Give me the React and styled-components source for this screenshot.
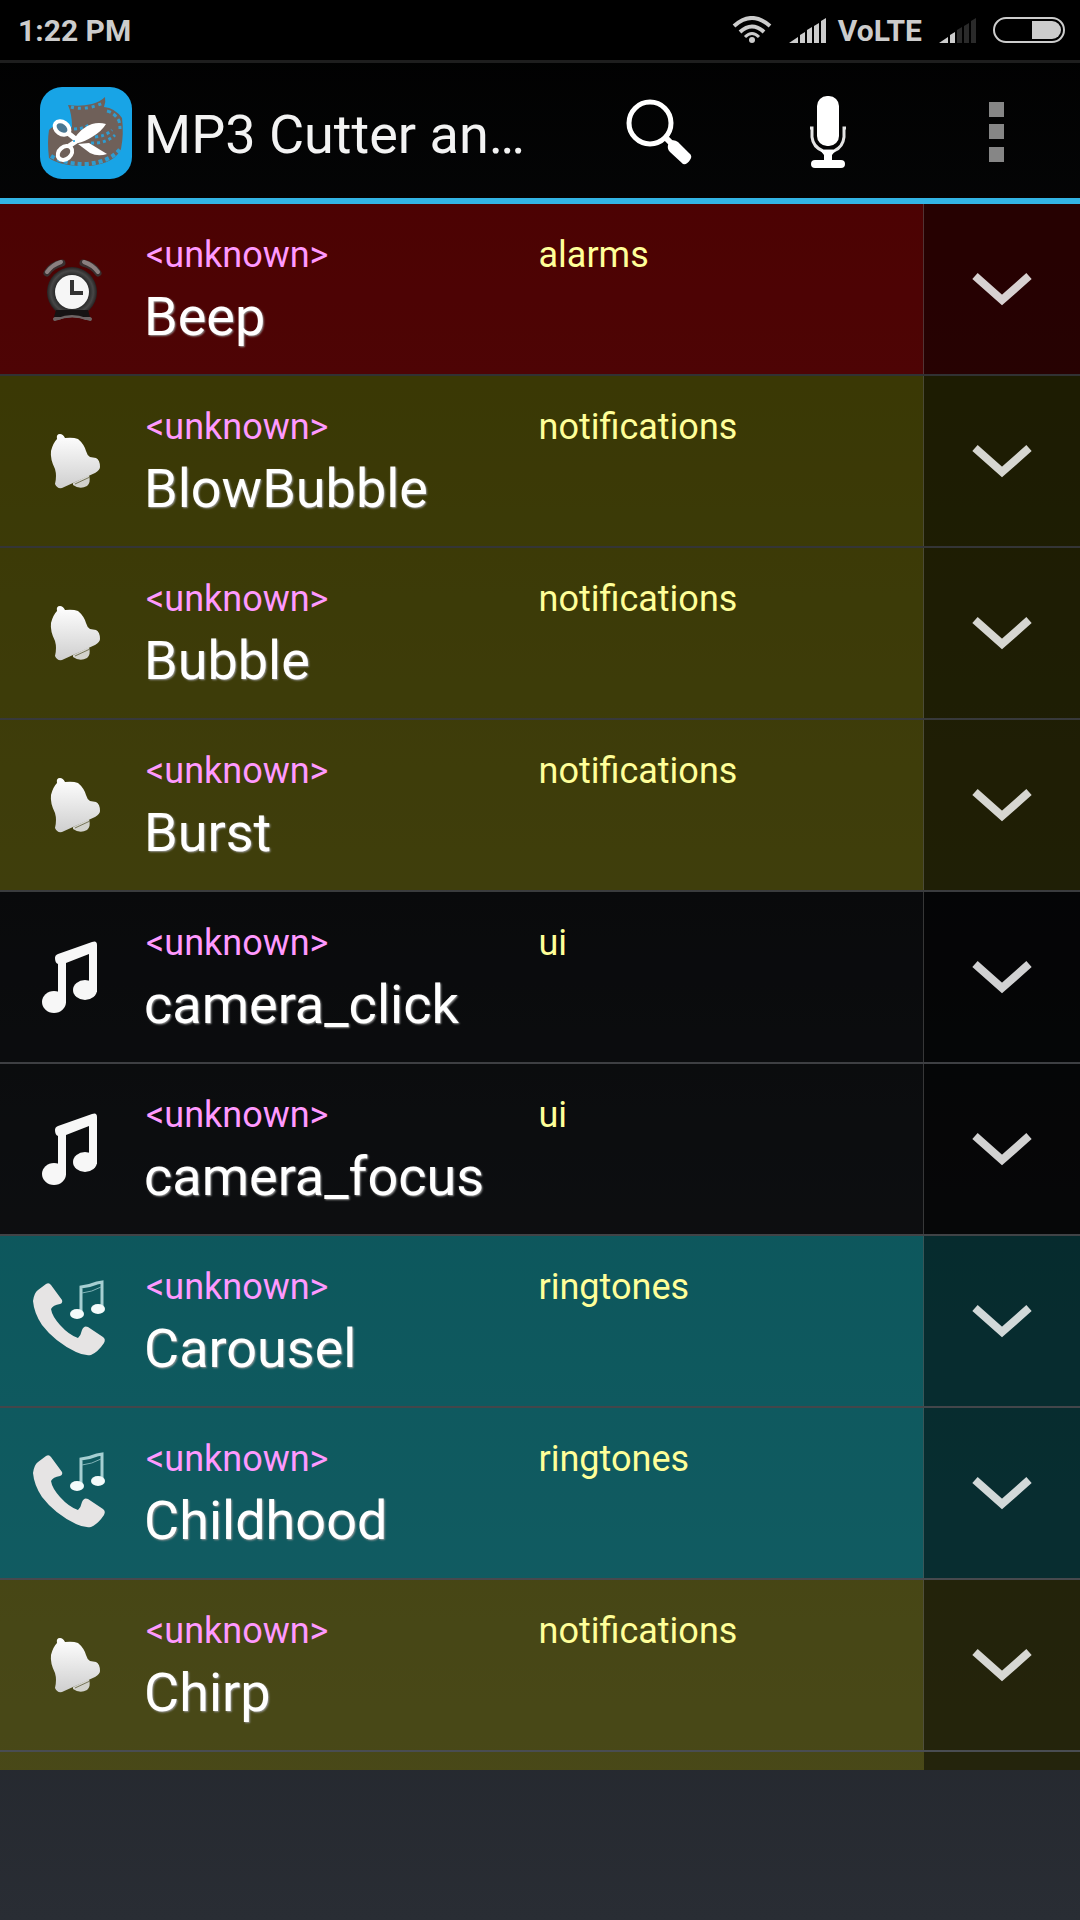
import React from 'react'
import styled, { createGlobalStyle } from 'styled-components'

const tints = {
    alarms: 'rgba(148, 0, 0, 0.5)',
    notifications: 'rgba(108, 104, 0, 0.5)',
    ui: 'rgba(0, 0, 0, 0.5)',
    ringtones: 'rgba(0, 145, 152, 0.5)',
}

const tracks = [
    { title: 'Beep', artist: '<unknown>', album: 'alarms' },
    { title: 'BlowBubble', artist: '<unknown>', album: 'notifications' },
    { title: 'Bubble', artist: '<unknown>', album: 'notifications' },
    { title: 'Burst', artist: '<unknown>', album: 'notifications' },
    { title: 'camera_click', artist: '<unknown>', album: 'ui' },
    { title: 'camera_focus', artist: '<unknown>', album: 'ui' },
    { title: 'Carousel', artist: '<unknown>', album: 'ringtones' },
    { title: 'Childhood', artist: '<unknown>', album: 'ringtones' },
    { title: 'Chirp', artist: '<unknown>', album: 'notifications' },
]

function AlarmIcon() {
    return (
        <svg width="96" height="96" viewBox="0 0 96 96" aria-hidden="true">
            <defs>
                <radialGradient id="clockBody">
                    <stop offset="0.6" stopColor="#1c1c1c" />
                    <stop offset="0.85" stopColor="#474747" />
                    <stop offset="1" stopColor="#262222" />
                </radialGradient>
            </defs>
            <path d="M23 32Q28 24 38 22M59 22Q69 24 74 32" fill="none" stroke="#3a3030" strokeWidth="7" strokeLinecap="round" />
            <path d="M23 31Q28 24 37 21M60 21Q69 24 74 31" fill="none" stroke="#8b8080" strokeWidth="4" strokeLinecap="round" />
            <path d="M31 78Q48 71 66 78" fill="none" stroke="#6d6464" strokeWidth="4" strokeLinecap="round" />
            <circle cx="48" cy="51" r="25" fill="url(#clockBody)" />
            <path d="M32 69L30 76H66L64 69Z" fill="#161313" />
            <path d="M34 78Q48 72 62 78" fill="none" stroke="#6d6464" strokeWidth="2" strokeLinecap="round" />
            <circle cx="48" cy="51" r="17" fill="#f6f6f6" />
            <path d="M48 39V52H59" fill="none" stroke="#333" strokeWidth="4" />
        </svg>
    )
}

function BellIcon() {
    return (
        <svg width="96" height="96" viewBox="0 0 96 96" aria-hidden="true">
            <defs>
                <linearGradient id="bellFill" x1="0" y1="0" x2="0" y2="1">
                    <stop offset="0" stopColor="#fff" />
                    <stop offset="1" stopColor="#cfcfcf" />
                </linearGradient>
            </defs>
            <path d="M49 70L65 62Q67 70 63 73Q56 77 49 72Z" fill="#d2d2cc" />
            <path
                d="M33 26Q32 21 36 21Q39 21 41 25Q49 24 54 26Q60 31 62 38Q63 42 66 44L72 45Q76 47 76 54Q76 57 71 60L38 75Q33 76 31 71Q33 63 31 56Q26 46 27 38Q29 30 33 26Z"
                fill="url(#bellFill)"
            />
            <path d="M51 71L66 64" stroke="#77765a" strokeWidth="1" />
        </svg>
    )
}

function NotesIcon() {
    return (
        <svg width="96" height="96" viewBox="0 0 96 96" aria-hidden="true" fill="#f7f7f7">
            <path d="M34 73V35Q31 34 31 29Q31 26 34 25L68 13Q73 11 73 16V63H65V25L42 34V74Z" />
            <ellipse cx="30" cy="73" rx="12" ry="11" />
            <ellipse cx="61" cy="61" rx="12" ry="10" />
        </svg>
    )
}

function RingtoneIcon() {
    return (
        <svg width="96" height="96" viewBox="0 0 96 96" aria-hidden="true">
            <path
                d="M22 11Q25 9 27 12L38 27Q39 30 36 31Q29 32 27 36Q28 43 36 52Q45 62 54 65Q57 62 58 57Q60 52 64 54L79 64Q82 66 80 70Q74 79 67 82Q60 83 52 79Q31 69 18 52Q10 40 9 28Q10 20 14 17Z"
                fill="#e6e4e4"
            />
            <path d="M57 41V14Q66 13 73 10L78 9V36" fill="none" stroke="#a6cfd2" strokeWidth="3" />
            <path d="M58 20Q68 19 77 14" fill="none" stroke="#7fb2b6" strokeWidth="1" />
            <ellipse cx="53" cy="41" rx="7" ry="5" fill="#f4fbfb" />
            <ellipse cx="74" cy="36" rx="7" ry="5" fill="#f4fbfb" />
        </svg>
    )
}

const icons = {
    alarms: AlarmIcon,
    notifications: BellIcon,
    ui: NotesIcon,
    ringtones: RingtoneIcon,
}

function AppLogo() {
    return (
        <svg width="92" height="92" viewBox="0 0 92 92" aria-hidden="true">
            <rect width="92" height="92" rx="22" fill="#18a4e6" />
            <path
                d="M28 18Q40 20 52 17Q60 15 65 10Q66 15 64 20Q75 21 82 31Q84 47 81 62Q75 76 50 79Q22 80 9 71Q7 55 9 43Q14 37 24 40Q31 42 32 40Q32 27 28 18Z"
                fill="#6f6059"
            />
            <path d="M31 20Q45 24 63 16" fill="none" stroke="#2f9cd0" strokeWidth="3" strokeDasharray="3 4" />
            <path d="M67 24Q75 26 79 34Q80 38 80 42" fill="none" stroke="#2f9cd0" strokeWidth="3" strokeDasharray="4 3" />
            <path d="M11 69Q24 77 46 77Q70 75 80 62" fill="none" stroke="#2f9cd0" strokeWidth="4" strokeDasharray="4 3" />
            <path d="M34 42Q42 42 49 38M51 56Q65 57 75 48M55 50Q66 49 72 43" fill="none" stroke="#2f9cd0" strokeWidth="3" strokeDasharray="3 3" />
            <path d="M28 46L38 54M29 59L38 53" stroke="#fff" strokeWidth="5" />
            <ellipse cx="22" cy="41" rx="8" ry="6" transform="rotate(35 22 41)" fill="#4a7792" stroke="#fff" strokeWidth="4" />
            <ellipse cx="25" cy="66" rx="8" ry="6" transform="rotate(-40 25 66)" fill="#6f6059" stroke="#fff" strokeWidth="4" />
            <path d="M33 53Q42 40 52 37Q59 35 66 37Q62 44 52 50Q44 55 38 56Z" fill="#fff" />
            <path d="M38 57L49 56L67 67Q58 70 50 66Z" fill="#fff" />
            <circle cx="34" cy="54" r="1" fill="#18a4e6" />
        </svg>
    )
}

function SearchIcon() {
    return (
        <svg width="72" height="72" viewBox="0 0 72 72" aria-hidden="true">
            <circle cx="26" cy="27" r="21" fill="none" stroke="#fff" strokeWidth="5" />
            <path d="M41 41L50 50" stroke="#fff" strokeWidth="6" />
            <path d="M46 45Q50 43 54 46L65 57Q69 60 66 64Q63 69 59 68L46 56Q43 53 44 49Z" fill="#fff" />
        </svg>
    )
}

function MicIcon() {
    return (
        <svg width="72" height="74" viewBox="0 0 72 74" aria-hidden="true">
            <rect x="25" y="1" width="22" height="50" rx="10" fill="#fff" />
            <path d="M18 33H20V42Q21 52 31 56H42Q51 52 52 42V33H54" fill="none" stroke="#e4e4e4" strokeWidth="3" />
            <path d="M28 55H44L40 60V66H32V60Z" fill="#fff" />
            <rect x="19" y="65" width="34" height="8" rx="4" fill="#fff" />
        </svg>
    )
}

function MoreIcon() {
    return (
        <svg width="15" height="60" viewBox="0 0 15 60" aria-hidden="true" fill="#868686">
            <rect width="15" height="15" />
            <rect y="22" width="15" height="15" />
            <rect y="45" width="15" height="15" />
        </svg>
    )
}

function ChevronIcon() {
    return (
        <svg width="60" height="34" viewBox="0 0 60 34" aria-hidden="true">
            <path d="M3 4L30 28L57 4" fill="none" stroke="#fff" strokeOpacity="0.82" strokeWidth="8" />
        </svg>
    )
}

function WifiIcon() {
    return (
        <svg width="40" height="28" viewBox="0 0 40 28" aria-hidden="true">
            <g fill="none" stroke="#ccc" strokeWidth="4">
                <path d="M2 10Q20 -6 38 10" />
                <path d="M8 16Q20 5 32 16" />
                <path d="M13 21Q20 14 27 21" strokeWidth="3" />
            </g>
            <circle cx="20" cy="24" r="3" fill="#ccc" />
        </svg>
    )
}

// level = how many of the five bars are lit
function SignalIcon({ level }) {
    const bars = ['M0 25L9 19V25Z', 'M11 17L16 14V25H11Z', 'M18 12L23 9V25H18Z', 'M25 8L30 5V25H25Z', 'M32 3L37 0V25H32Z']
    return (
        <svg width="37" height="25" viewBox="0 0 37 25" aria-hidden="true">
            {bars.map((d, i) => <path key={d} d={d} fill={i < level ? '#ccc' : '#2a2a2a'} />)}
        </svg>
    )
}

function BatteryIcon() {
    return (
        <svg width="72" height="26" viewBox="0 0 72 26" aria-hidden="true">
            <rect x="1" y="1" width="70" height="24" rx="12" fill="none" stroke="#ccc" strokeWidth="2" />
            <path d="M39 4H59A9 9 0 0 1 59 22H39Z" fill="#ccc" />
        </svg>
    )
}

function Track({ track }) {
    const Icon = icons[track.album]

    return (
        <Row $album={track.album}>
            <IconCell><Icon /></IconCell>
            <Info>
                <Meta>
                    <Artist>{track.artist}</Artist>
                    <Album>{track.album}</Album>
                </Meta>
                <TrackTitle>{track.title}</TrackTitle>
            </Info>
            <MenuButton aria-label={`Options for ${track.title}`}>
                <ChevronIcon />
            </MenuButton>
        </Row>
    )
}

export default function App() {
    return (
        <Screen>
            <GlobalStyle />
            <StatusBar>
                <span>1:22 PM</span>
                <StatusIcons>
                    <WifiIcon />
                    <Network>
                        <SignalIcon level={5} />
                        <span>VoLTE</span>
                    </Network>
                    <SignalIcon level={2} />
                    <BatteryIcon />
                </StatusIcons>
            </StatusBar>
            <ActionBar>
                <LogoCell><AppLogo /></LogoCell>
                <AppTitle>MP3 Cutter an…</AppTitle>
                <ActionButton aria-label="Search"><SearchIcon /></ActionButton>
                <ActionButton aria-label="Record"><MicIcon /></ActionButton>
                <ActionButton aria-label="More options"><MoreIcon /></ActionButton>
            </ActionBar>
            <TrackList>
                {tracks.map(track => <Track key={track.title} track={track} />)}
                <NextRow $album="notifications">
                    <NextMenu />
                </NextRow>
            </TrackList>
            <BottomSpace />
        </Screen>
    )
}

const GlobalStyle = createGlobalStyle`
    * {
        box-sizing: border-box;
    }
    body {
        margin: 0;
        background: #000;
        font-family: Roboto, sans-serif;
    }
    button {
        padding: 0;
        border: 0;
        background: none;
        font: inherit;
        color: inherit;
        cursor: pointer;
    }
    svg {
        display: block;
        flex: none;
    }
`
const Screen = styled.div`
    display: flex;
    flex-direction: column;
    min-height: 100vh;
    background: linear-gradient(#000, #292d34);
    color: #fff;
`
const StatusBar = styled.header`
    display: flex;
    align-items: center;
    justify-content: space-between;
    height: 63px;
    padding: 0 15px 0 18px;
    border-bottom: 3px solid #1e1e1e;
    background: #000;
    color: #ccc;
    font-size: 30px;
    font-weight: 700;
`
const StatusIcons = styled.div`
    display: flex;
    align-items: center;
    gap: 17px;
`
const Network = styled.div`
    display: flex;
    align-items: center;
    gap: 12px;
`
const ActionBar = styled.nav`
    display: flex;
    align-items: stretch;
    height: 141px;
    border-bottom: 6px solid #33b5e5;
`
const LogoCell = styled.div`
    display: flex;
    align-items: center;
    justify-content: flex-end;
    width: 144px;
    padding: 4px 12px 0 0;
`
const AppTitle = styled.h1`
    flex: 1;
    align-self: center;
    margin: 0;
    padding-top: 8px;
    color: #f3f3f3;
    font-size: 54px;
    font-weight: 400;
    line-height: 64px;
    white-space: nowrap;
`
const ActionButton = styled.button`
    display: flex;
    align-items: center;
    justify-content: center;
    width: 168px;
    padding-top: 2px;
`
const TrackList = styled.ul`
    display: flex;
    flex: 1;
    flex-direction: column;
    margin: 0;
    padding: 0;
    list-style: none;
`
const Row = styled.li`
    display: flex;
    border-bottom: 2px solid rgba(255, 255, 255, 0.17);
    background: ${({ $album }) => tints[$album]};
    background-clip: padding-box;
`
const IconCell = styled.div`
    display: flex;
    align-items: center;
    justify-content: center;
    width: 144px;
`
const Info = styled.div`
    flex: 1;
    min-width: 0;
    padding: 30px 0 25px;
`
const Meta = styled.div`
    display: grid;
    grid-template-columns: 1fr 1fr;
    column-gap: 8px;
    margin-bottom: 9px;
    padding-left: 2px;
    font-size: 36px;
    line-height: 42px;
`
const Artist = styled.span`
    color: #ff99ff;
`
const Album = styled.span`
    color: #ffff99;
`
const TrackTitle = styled.div`
    font-size: 54px;
    line-height: 64px;
    text-shadow: 1px 1px 2px #999;
`
const MenuButton = styled.button`
    display: flex;
    align-items: center;
    justify-content: center;
    width: 157px;
    border-left: 1px solid rgba(255, 255, 255, 0.2);
    background: rgba(0, 0, 0, 0.5);
`
const NextRow = styled(Row)`
    flex: 1;
    justify-content: flex-end;
    border-bottom: 0;
`
const NextMenu = styled.div`
    width: 156px;
    background: rgba(0, 0, 0, 0.5);
`
const BottomSpace = styled.footer`
    height: 150px;
`
